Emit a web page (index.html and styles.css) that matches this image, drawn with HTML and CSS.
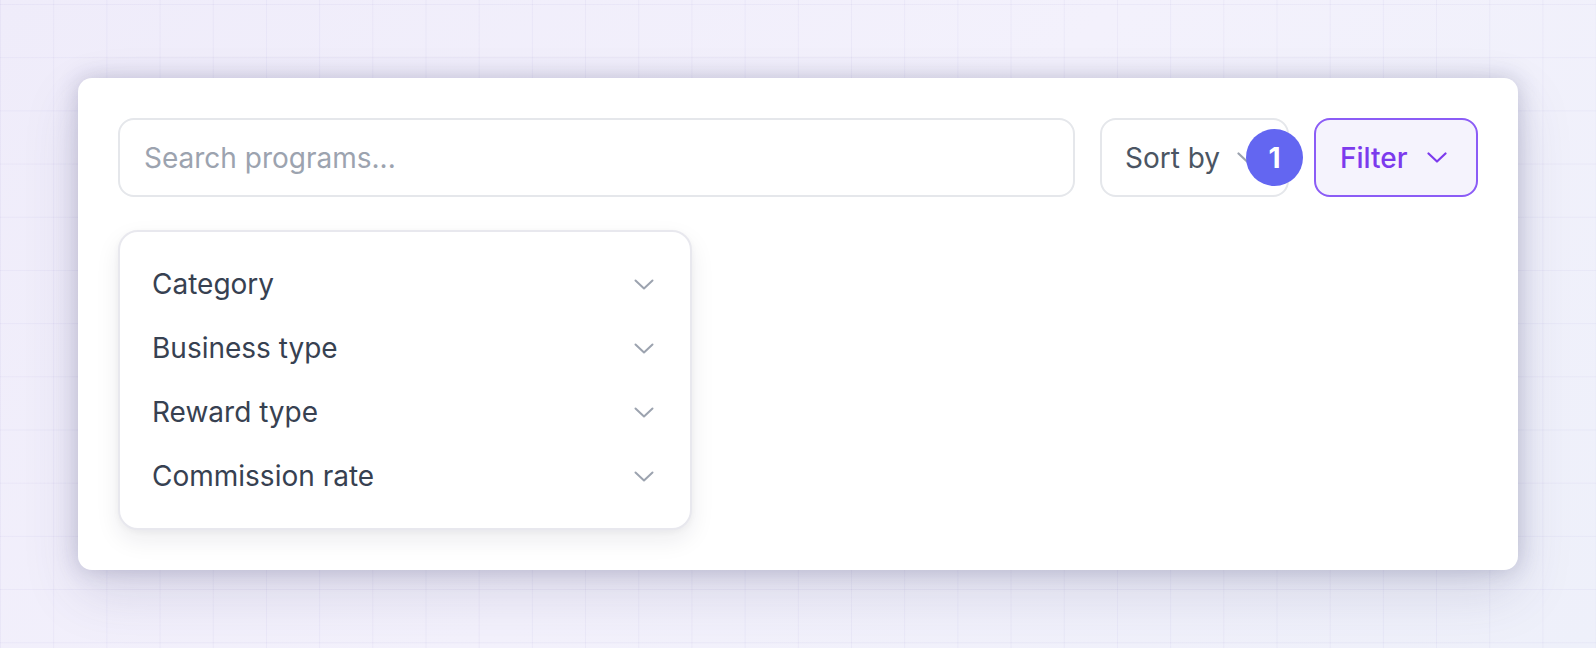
FILE: index.html
```html
<!DOCTYPE html>
<html lang="en">
<head>
<meta charset="utf-8">
<title>Programs filter</title>
<link rel="stylesheet" href="styles.css">
</head>
<body>
<div class="page">
  <section class="card">
    <div class="toolbar">
      <div class="search">
        <input class="search-input" type="text" placeholder="Search programs...">
      </div>
      <div class="sort-wrap">
        <button class="btn sort-btn" type="button">
          <span>Sort by</span>
          <svg class="chev" width="20" height="11" viewBox="0 0 20 11" aria-hidden="true"><polyline points="1.5,1.5 10,9.5 18.5,1.5" fill="none" stroke="currentColor" stroke-width="2.2" stroke-linecap="round" stroke-linejoin="round"/></svg>
        </button>
        <span class="badge">1</span>
      </div>
      <button class="btn filter-btn" type="button">
        <span>Filter</span>
        <svg class="chev" width="20" height="11" viewBox="0 0 20 11" aria-hidden="true"><polyline points="1.5,1.5 10,9.5 18.5,1.5" fill="none" stroke="currentColor" stroke-width="2.2" stroke-linecap="round" stroke-linejoin="round"/></svg>
      </button>
    </div>
    <div class="menu">
      <div class="menu-item"><span>Category</span><svg class="chev-sm" width="20" height="11" viewBox="0 0 20 11" aria-hidden="true"><polyline points="1.5,1.5 10,9.5 18.5,1.5" fill="none" stroke="currentColor" stroke-width="2" stroke-linecap="round" stroke-linejoin="round"/></svg></div>
      <div class="menu-item"><span>Business type</span><svg class="chev-sm" width="20" height="11" viewBox="0 0 20 11" aria-hidden="true"><polyline points="1.5,1.5 10,9.5 18.5,1.5" fill="none" stroke="currentColor" stroke-width="2" stroke-linecap="round" stroke-linejoin="round"/></svg></div>
      <div class="menu-item"><span>Reward type</span><svg class="chev-sm" width="20" height="11" viewBox="0 0 20 11" aria-hidden="true"><polyline points="1.5,1.5 10,9.5 18.5,1.5" fill="none" stroke="currentColor" stroke-width="2" stroke-linecap="round" stroke-linejoin="round"/></svg></div>
      <div class="menu-item"><span>Commission rate</span><svg class="chev-sm" width="20" height="11" viewBox="0 0 20 11" aria-hidden="true"><polyline points="1.5,1.5 10,9.5 18.5,1.5" fill="none" stroke="currentColor" stroke-width="2" stroke-linecap="round" stroke-linejoin="round"/></svg></div>
    </div>
  </section>
</div>
</body>
</html>
```
FILE: styles.css
```css
* { box-sizing: border-box; }
html, body { margin: 0; padding: 0; }
body {
  width: 1596px;
  height: 648px;
  overflow: hidden;
  font-family: Inter, "Noto Sans", sans-serif;
  background-color: #f0eefa;
  background-image:
    linear-gradient(to right, rgba(110, 100, 190, 0.06) 1px, transparent 1px),
    linear-gradient(to bottom, rgba(110, 100, 190, 0.06) 1px, transparent 1px),
    linear-gradient(135deg, #efecfa 0%, #f3f1fc 50%, #eef0fa 100%);
  background-size: 53.2px 53.2px, 53.2px 53.2px, 100% 100%;
  background-position: 0 0, 0 4px, 0 0;
}
.page {
  padding: 78px 78px 0 78px;
}
.card {
  width: 1440px;
  height: 492px;
  background: #ffffff;
  border-radius: 14px;
  padding: 40px 40px 42px 40px;
  box-shadow:
    0 0 22px rgba(60, 60, 110, 0.24),
    0 22px 55px rgba(60, 60, 110, 0.15);
}
.toolbar {
  display: flex;
  align-items: center;
  gap: 25px;
  height: 79px;
}
.search {
  flex: 1;
  height: 100%;
}
.search-input {
  width: 100%;
  height: 100%;
  border: 2px solid #e5e7eb;
  border-radius: 16px;
  padding: 0 0 0 24px;
  font-family: inherit;
  font-size: 28px;
  color: #374151;
  background: #fff;
  outline: none;
}
.search-input::placeholder { color: #9ca3af; }
.sort-wrap {
  position: relative;
  height: 100%;
}
.btn {
  height: 100%;
  display: flex;
  align-items: center;
  font-family: inherit;
  font-size: 28px;
  border-radius: 16px;
  cursor: pointer;
}
.sort-btn {
  width: 189px;
  border: 2px solid #e5e7eb;
  background: #fff;
  color: #4b5563;
  padding: 0 0 0 23px;
  gap: 17px;
}
.sort-btn .chev { color: #9ca3af; }
.badge {
  position: absolute;
  right: -14px;
  top: 11px;
  width: 57px;
  height: 57px;
  border-radius: 50%;
  background: #6366f1;
  color: #fff;
  font-size: 28px;
  font-weight: 700;
  display: flex;
  align-items: center;
  justify-content: center;
}
.filter-btn {
  width: 164px;
  border: 2px solid #8b5cf6;
  background: #f5f3fd;
  color: #7c3aed;
  font-weight: 500;
  padding: 0 0 0 24px;
  gap: 19px;
}
.menu {
  margin-top: 33px;
  width: 574px;
  border: 2px solid #e8e8ee;
  border-radius: 20px;
  background: #fff;
  padding: 20px 36px 20px 32px;
  box-shadow: 0 10px 24px rgba(20, 20, 50, 0.08), 0 2px 6px rgba(20, 20, 50, 0.04);
}
.menu-item {
  height: 64px;
  display: flex;
  align-items: center;
  justify-content: space-between;
  font-size: 28px;
  color: #374151;
}
.chev-sm { color: #9ca3af; }
```
